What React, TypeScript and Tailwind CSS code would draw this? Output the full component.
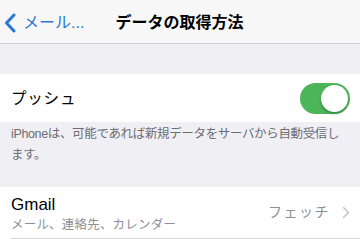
import React from "react";

const font = { fontFamily: '"Liberation Sans", "Noto Sans CJK JP", sans-serif' };

export default function App() {
  return (
    <div className="w-[360px] h-[240px] overflow-hidden bg-[#efeff4] flex flex-col" style={font}>
      {/* Nav bar */}
      <div className="relative h-[44px] shrink-0 bg-[#f7f7f8] border-b border-[#cfcfd3] flex items-center">
        <div className="flex items-center pl-[4px] text-[#2a77d4]">
          <svg width="12" height="20" viewBox="0 0 12 20" className="mt-[2px]">
            <path d="M10 2 L2.5 10 L10 18" fill="none" stroke="#2a77d4" strokeWidth="3" strokeLinecap="round" strokeLinejoin="round" />
          </svg>
          <span className="ml-[7px] text-[16px] leading-none mt-[3px]">メール...</span>
        </div>
        <div className="absolute left-0 right-0 top-0 bottom-0 flex items-center justify-center pointer-events-none">
          <span className="text-[16px] font-bold text-black leading-none ml-[-1px] mt-[3px]">データの取得方法</span>
        </div>
      </div>
      <div className="h-[30px] shrink-0" />
      {/* Push row */}
      <div className="h-[48px] shrink-0 bg-white flex items-center justify-between pl-[11px] pr-[10px]">
        <span className="text-[15.5px] text-black tracking-[0.8px] mt-[1px]">プッシュ</span>
        <div className="w-[50px] h-[31px] rounded-full bg-[#4cb55a] relative">
          <div className="absolute right-[2px] top-[2px] w-[27px] h-[27px] rounded-full bg-white shadow-[0_2px_3px_rgba(0,0,0,0.25)]" />
        </div>
      </div>
      {/* Footer */}
      <div className="h-[65px] shrink-0 pl-[11px] pr-[12px] pt-[2px] text-[12.5px] leading-[21px] text-[#6d6d72] tracking-[-0.35px]">
        iPhoneは、可能であれば新規データをサーバから自動受信します。
      </div>
      {/* Gmail row */}
      <div className="bg-white flex-1 pl-[11px]">
        <div className="h-[52px] border-b border-[#d8d8dc] flex items-center justify-between pr-[10px]">
          <div className="flex flex-col pt-[4px]">
            <span className="text-[17px] leading-[20px] text-black">Gmail</span>
            <span className="text-[12.5px] leading-[20px] text-[#8e8e93] tracking-[0.2px]">メール、連絡先、カレンダー</span>
          </div>
          <div className="flex items-center text-[#8e8e93]">
            <span className="text-[14px] tracking-[1.5px]">フェッチ</span>
            <svg width="8" height="13" viewBox="0 0 8 13" className="ml-[12px]">
              <path d="M1.5 1.5 L6.5 6.5 L1.5 11.5" fill="none" stroke="#c7c7cc" strokeWidth="1.6" strokeLinecap="round" strokeLinejoin="round" />
            </svg>
          </div>
        </div>
      </div>
    </div>
  );
}
